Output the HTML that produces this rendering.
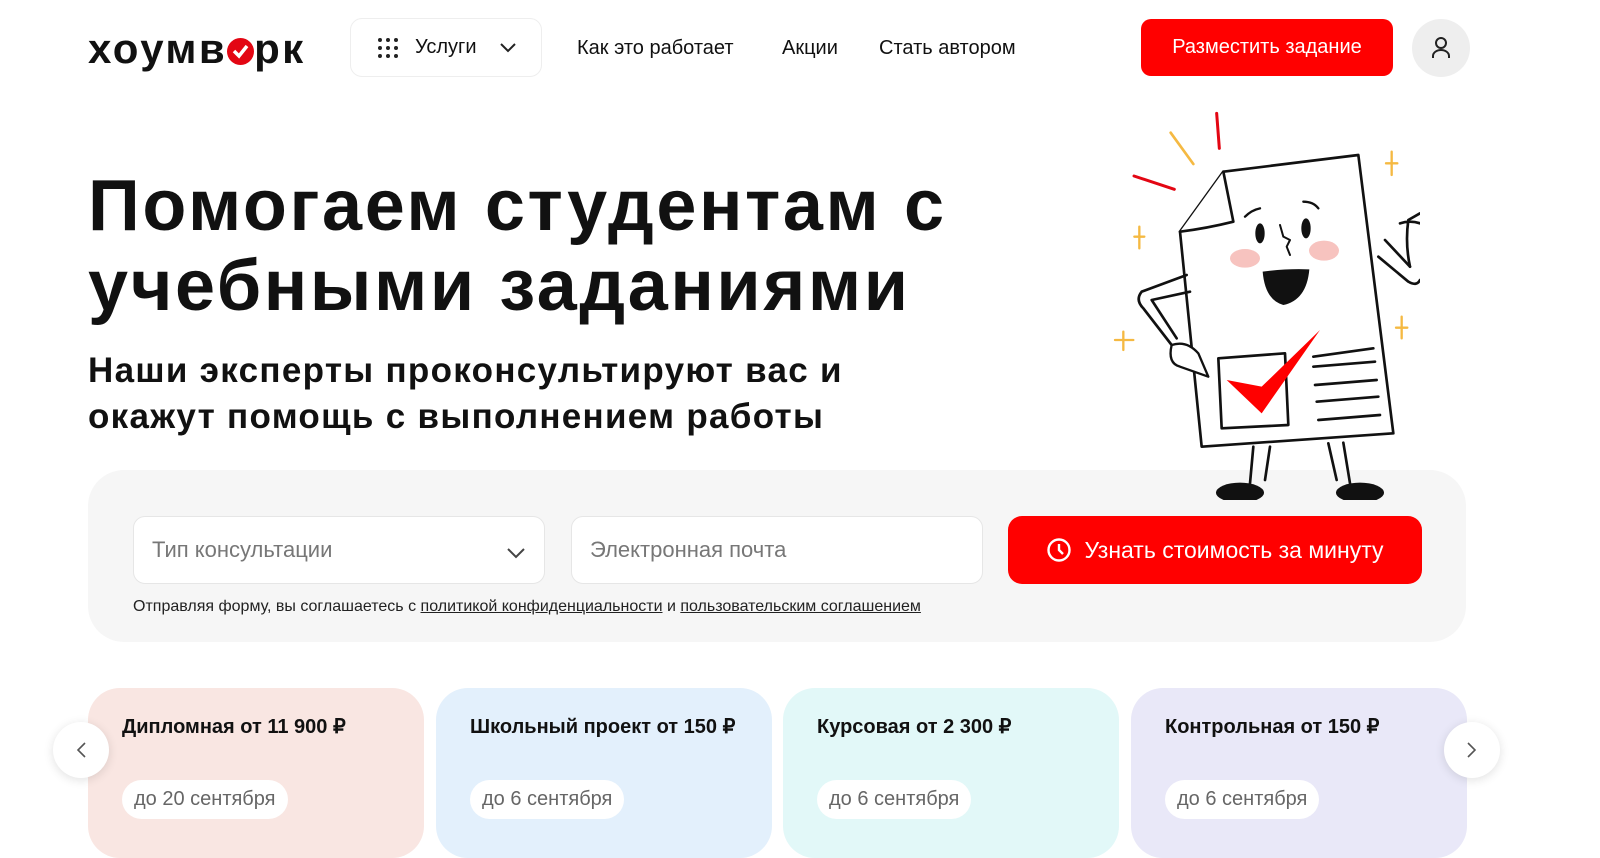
<!DOCTYPE html>
<html><head><meta charset="utf-8">
<style>
*{box-sizing:border-box;margin:0;padding:0}
body{width:1600px;height:846px;overflow:hidden;background:#fff;font-family:"Liberation Sans",sans-serif;color:#111;position:relative}
.abs{position:absolute}
.logo{left:88px;top:25px;font-size:42px;font-weight:bold;letter-spacing:2.4px;color:#111}
.svc{left:350px;top:18px;width:192px;height:59px;border:1px solid #eee;border-radius:12px;display:flex;align-items:center;padding-left:26px;font-size:20px}
.nav{top:37px;font-size:20px;color:#111}
.btn{left:1141px;top:19px;width:252px;height:57px;background:#ff0000;color:#fff;border-radius:10px;font-size:20px;display:flex;align-items:center;justify-content:center}
.av{left:1412px;top:19px;width:58px;height:58px;border-radius:50%;background:#eeeeee;display:flex;align-items:center;justify-content:center}
h1{position:absolute;left:88px;top:166px;font-size:72px;line-height:80px;font-weight:bold;letter-spacing:2.6px}
h2{position:absolute;left:88px;top:348px;font-size:35px;line-height:46px;font-weight:bold;letter-spacing:1.3px}
.panel{left:88px;top:470px;width:1378px;height:172px;background:#f6f6f6;border-radius:36px}
.inp{top:516px;height:68px;background:#fff;border:1px solid #e6e6e6;border-radius:12px;font-size:22px;color:#777;display:flex;align-items:center;padding-left:18px}
.go{left:1008px;top:516px;width:414px;height:68px;background:#ff0000;border-radius:14px;color:#fff;font-size:23px;display:flex;align-items:center;justify-content:center;gap:12px}
.note{left:133px;top:598px;font-size:16px;color:#222}
.note u{color:#222}
.card{top:688px;width:336px;height:170px;border-radius:32px}
.card b{position:absolute;left:34px;top:26px;font-size:20px}
.card span{position:absolute;left:34px;top:92px;background:#fff;border-radius:20px;padding:8px 12px;font-size:20px;color:#666}
.arr{top:722px;width:56px;height:56px;border-radius:50%;background:#fff;box-shadow:0 2px 10px rgba(0,0,0,.12);display:flex;align-items:center;justify-content:center}
</style></head><body>
<div class="abs logo">хоумв<span style="display:inline-block;width:27px;height:27px;border-radius:50%;background:#e30613;vertical-align:-2px;position:relative"><svg width="27" height="27" style="position:absolute;left:0;top:0"><path d="M7 13l5 5 8-10" stroke="#fff" stroke-width="3.5" fill="none"/></svg></span>рк</div>
<div class="abs svc"><svg width="22" height="22" viewBox="0 0 22 22" fill="#222"><circle cx="3" cy="3" r="2"/><circle cx="11" cy="3" r="2"/><circle cx="19" cy="3" r="2"/><circle cx="3" cy="11" r="2"/><circle cx="11" cy="11" r="2"/><circle cx="19" cy="11" r="2"/><circle cx="3" cy="19" r="2"/><circle cx="11" cy="19" r="2"/><circle cx="19" cy="19" r="2"/></svg><span style="margin-left:16px">Услуги</span><svg width="18" height="12" style="margin-left:22px"><path d="M2 2l7 7 7-7" stroke="#222" stroke-width="2" fill="none"/></svg></div>
<div class="abs nav" style="left:577px">Как это работает</div>
<div class="abs nav" style="left:782px">Акции</div>
<div class="abs nav" style="left:879px">Стать автором</div>
<div class="abs btn">Разместить задание</div>
<div class="abs av"><svg width="22" height="24" viewBox="0 0 22 24"><circle cx="11" cy="7" r="5" stroke="#222" stroke-width="2" fill="none"/><path d="M3 22v-2a8 6 0 0 1 16 0v2" stroke="#222" stroke-width="2" fill="none"/></svg></div>
<h1>Помогаем студентам с<br>учебными заданиями</h1>
<h2>Наши эксперты проконсультируют вас и<br>окажут помощь с выполнением работы</h2>
<div class="abs panel"></div>
<svg class="abs" style="left:1080px;top:100px" width="340" height="400" viewBox="0 0 1020 1200">
<g fill="none" stroke-linecap="round" stroke-linejoin="round">
<path d="M410 40L418 145" stroke="#e30613" stroke-width="9"/>
<path d="M272 98L340 192" stroke="#f5b942" stroke-width="8"/>
<path d="M162 228L283 268" stroke="#e30613" stroke-width="9"/>
<g stroke="#f5b942" stroke-width="7"><path d="M935 155v70M918 190h34M178 380v65M163 410h30M130 695v55M105 720h55M570 660v55M553 688h34M965 650v65M948 683h34"/></g>
<path d="M300 395L430 215L835 165L940 1000L365 1040Z" fill="#fff" stroke="#111" stroke-width="8"/>
<path d="M300 395Q380 385 460 365L430 215" fill="#fff" stroke="#111" stroke-width="8"/>
<path d="M320 525L185 575Q165 600 190 625L275 735M330 575L215 600L290 715" stroke="#111" stroke-width="8"/>
<path d="M275 735Q262 790 300 800L385 830L355 760Q320 720 275 735Z" fill="#fff" stroke="#111" stroke-width="7"/>
<path d="M895 470L985 545Q1010 560 1020 540M915 420L990 500" stroke="#111" stroke-width="8"/>
<path d="M990 500Q975 430 985 360L1020 340M960 370Q990 360 1020 370" stroke="#111" stroke-width="8"/>
<path d="M495 350Q515 330 540 325M670 305Q700 305 715 325" stroke="#111" stroke-width="7"/>
<path d="M600 375L610 410L630 420L620 440L630 465" stroke="#111" stroke-width="6"/>
<path d="M415 775L615 760L625 975L425 985Z" stroke="#111" stroke-width="8"/>
<path d="M700 770L880 745M700 800L885 785M705 855L890 840M710 905L895 890M715 960L900 945" stroke="#111" stroke-width="8"/>
<path d="M520 1040L510 1150M570 1040L555 1140M745 1030L770 1140M790 1028L810 1150" stroke="#111" stroke-width="8"/>
</g>
<ellipse cx="540" cy="400" rx="14" ry="30" fill="#111"/><ellipse cx="678" cy="385" rx="14" ry="30" fill="#111"/>
<ellipse cx="495" cy="475" rx="45" ry="28" fill="#f7c3bf"/><ellipse cx="732" cy="452" rx="45" ry="30" fill="#f7c3bf"/>
<path d="M548 515Q620 505 688 508Q680 600 610 615Q555 600 548 515Z" fill="#111"/>
<path d="M440 840L545 940L720 690L545 860Z" fill="#f00"/>
<ellipse cx="480" cy="1178" rx="72" ry="30" fill="#111"/><ellipse cx="840" cy="1178" rx="72" ry="30" fill="#111"/>
</svg>
<div class="abs inp" style="left:133px;width:412px">Тип консультации<svg width="20" height="12" style="position:absolute;right:18px;top:30px"><path d="M2 2l8 8 8-8" stroke="#444" stroke-width="2" fill="none"/></svg></div>
<div class="abs inp" style="left:571px;width:412px">Электронная почта</div>
<div class="abs go"><svg width="26" height="26" viewBox="0 0 26 26"><circle cx="13" cy="13" r="10.5" stroke="#fff" stroke-width="2.4" fill="none"/><path d="M13 7v6l4 4" stroke="#fff" stroke-width="2.4" fill="none"/></svg>Узнать стоимость за минуту</div>
<div class="abs note">Отправляя форму, вы соглашаетесь с <u>политикой конфиденциальности</u> и <u>пользовательским соглашением</u></div>
<div class="abs card" style="left:88px;background:#f9e6e2"><b>Дипломная от 11 900 ₽</b><span>до 20 сентября</span></div>
<div class="abs card" style="left:436px;background:#e3f0fc"><b>Школьный проект от 150 ₽</b><span>до 6 сентября</span></div>
<div class="abs card" style="left:783px;background:#e2f8f8"><b>Курсовая от 2 300 ₽</b><span>до 6 сентября</span></div>
<div class="abs card" style="left:1131px;background:#e9e8f8"><b>Контрольная от 150 ₽</b><span>до 6 сентября</span></div>
<div class="abs arr" style="left:53px"><svg width="12" height="18"><path d="M10 2L3 9l7 7" stroke="#555" stroke-width="1.6" fill="none"/></svg></div>
<div class="abs arr" style="left:1444px"><svg width="12" height="18"><path d="M2 2l7 7-7 7" stroke="#555" stroke-width="1.6" fill="none"/></svg></div>
</body></html>
